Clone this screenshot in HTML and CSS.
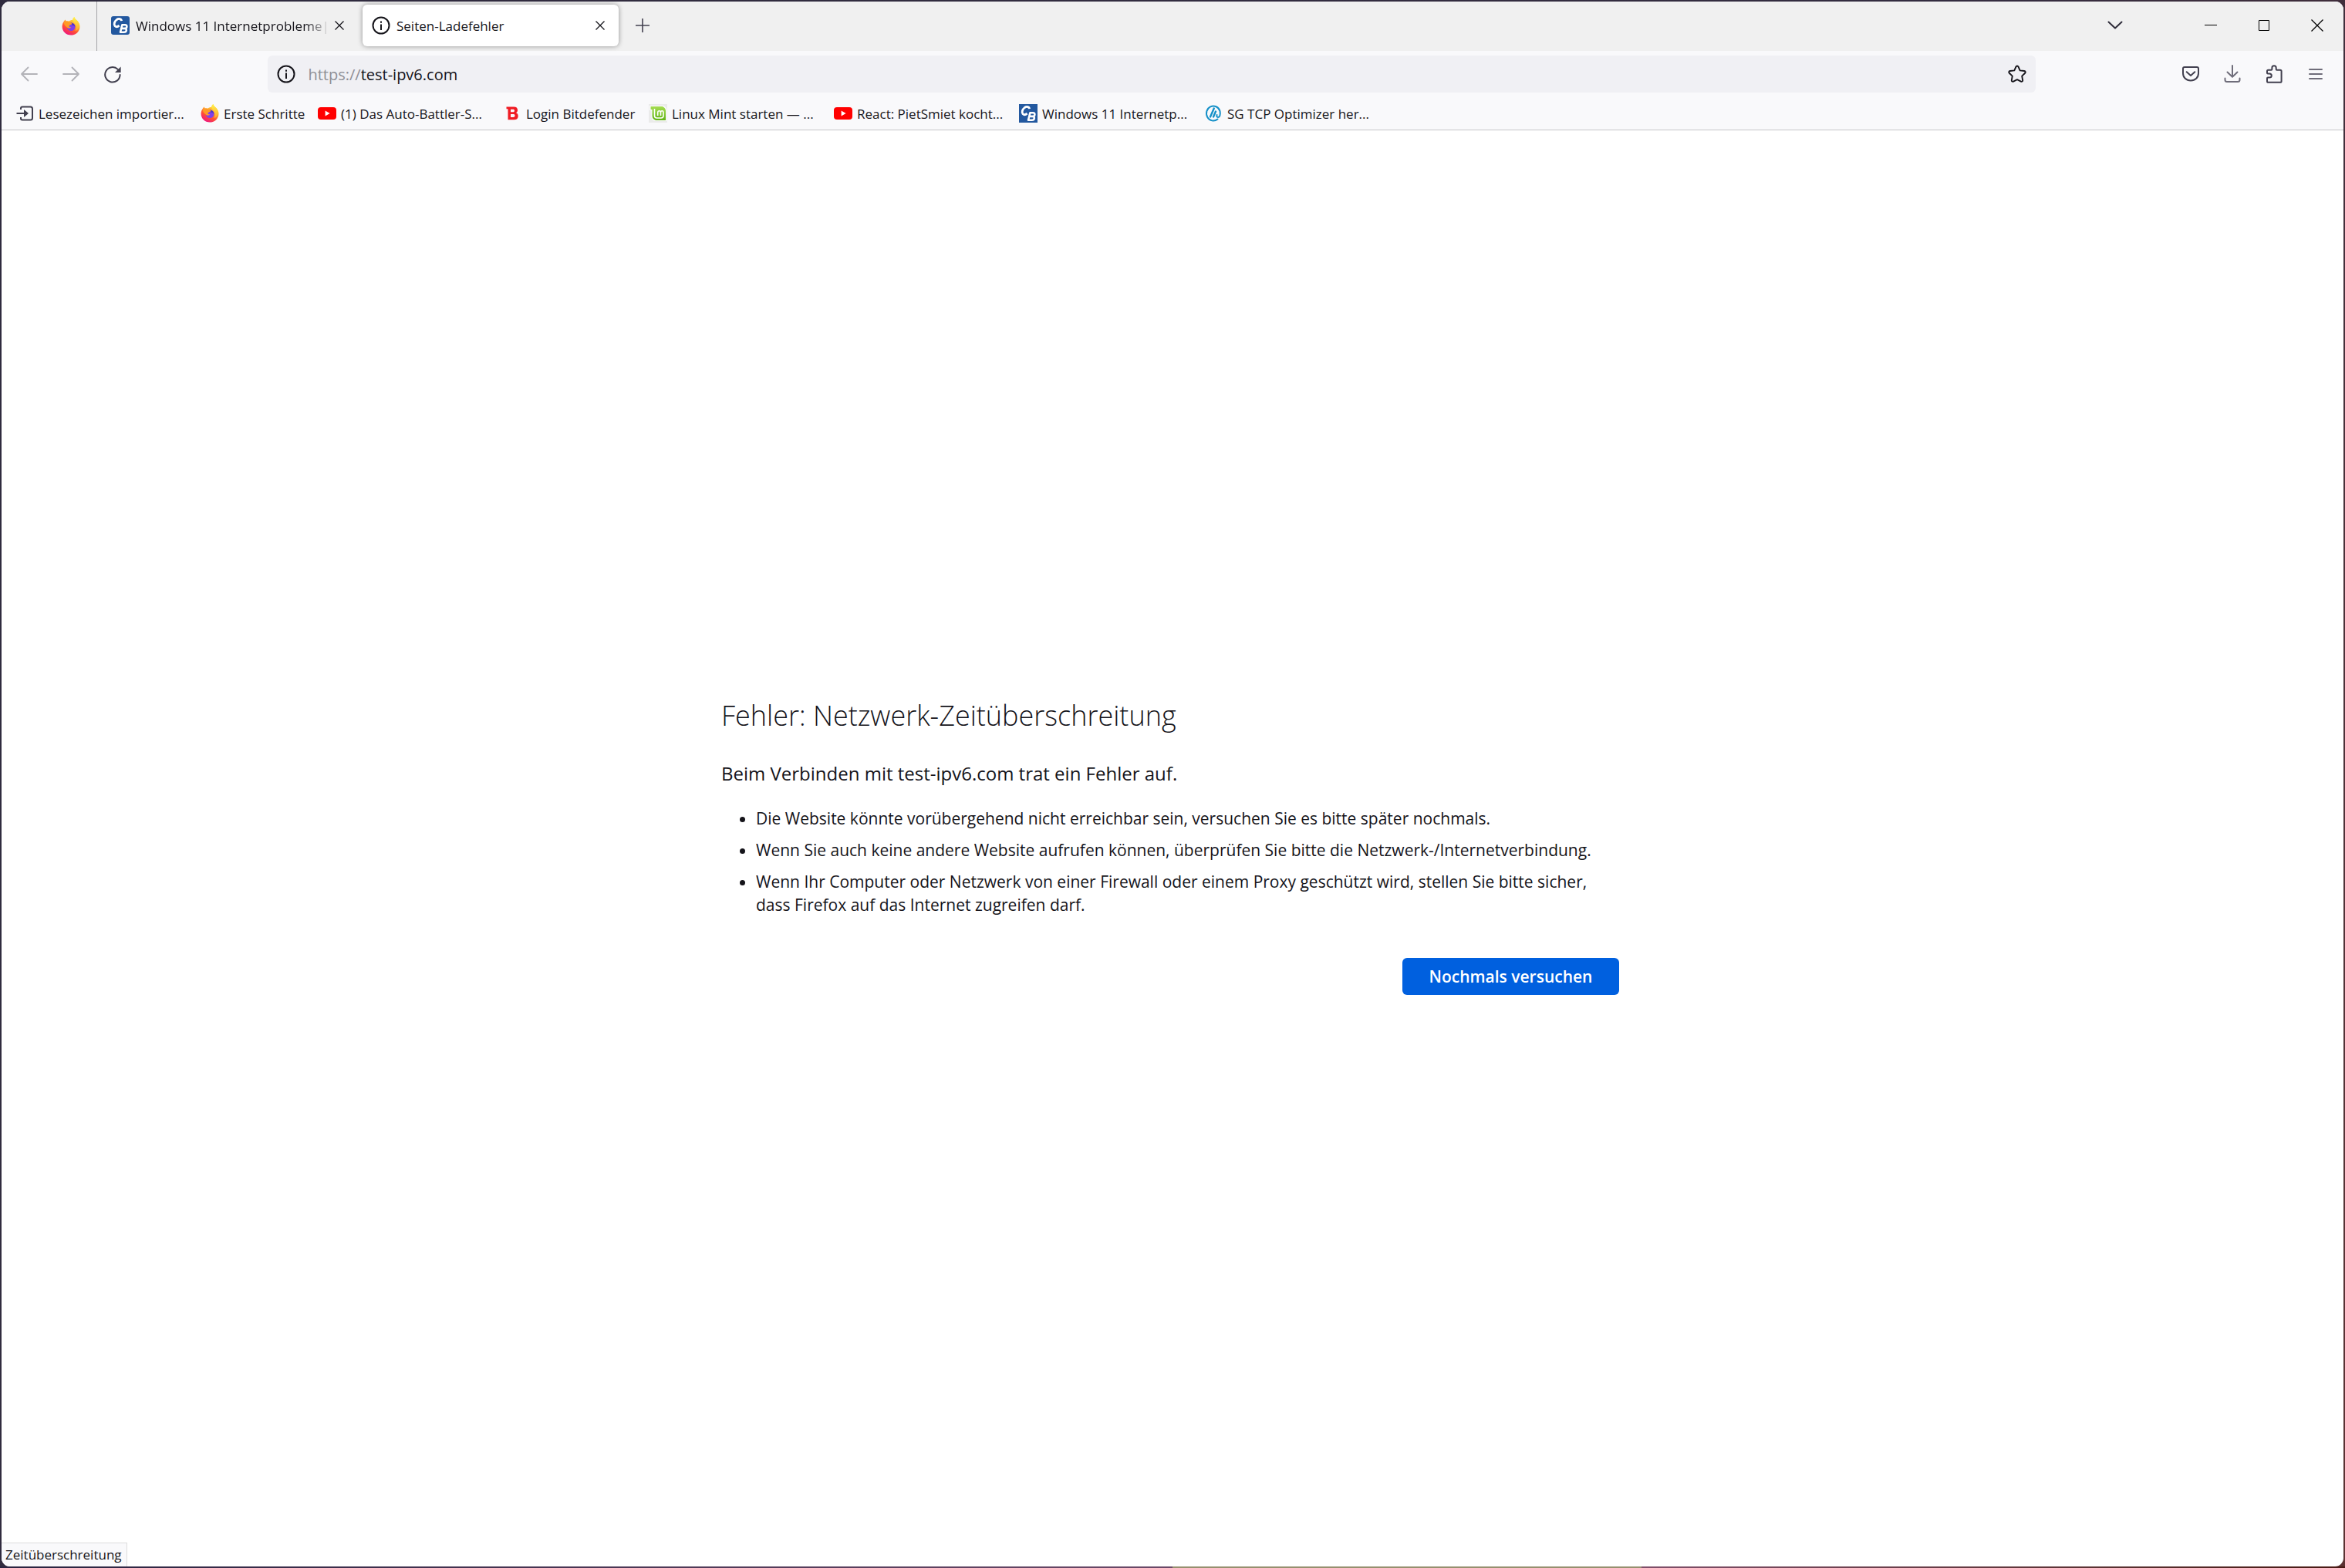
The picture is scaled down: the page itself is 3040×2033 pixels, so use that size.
FILE: index.html
```html
<!DOCTYPE html>
<html lang="de">
<head>
<meta charset="utf-8">
<title>Seiten-Ladefehler</title>
<link rel="stylesheet" href="styles.css">
</head>
<body>
<svg class="defs" aria-hidden="true">
  <defs>
    <linearGradient id="fx-body" x1="0.8" y1="0.1" x2="0.3" y2="1">
      <stop offset="0" stop-color="#fff044"/>
      <stop offset="0.35" stop-color="#ffa42c"/>
      <stop offset="0.65" stop-color="#ff5034"/>
      <stop offset="1" stop-color="#ee1284"/>
    </linearGradient>
    <linearGradient id="fx-tail" x1="0.5" y1="0" x2="0.5" y2="1">
      <stop offset="0" stop-color="#fff24a"/>
      <stop offset="1" stop-color="#ffa62e"/>
    </linearGradient>
    <linearGradient id="mint" x1="0" y1="0" x2="0" y2="1">
      <stop offset="0" stop-color="#a5dc52"/>
      <stop offset="1" stop-color="#62b416"/>
    </linearGradient>
    <symbol id="firefox" viewBox="0 0 24 24">
      <path fill="url(#fx-body)" d="M3 5.500C3.700 4.200 4.600 3.700 5 3.500 5 4.500 5.200 5.200 5.800 5.600c1.200-.4 2.500-.3 3.400.1C10.400 4.500 12 4 14 4c.2-1.800.9-3 2.500-4 .2 2.500 3.400 3.800 5 6.600C23.300 9 24 12 23.200 15 22 20 17.500 23.600 12 23.600 5.600 23.600.6 18.800.6 12.600.6 9.600 1.600 7.300 3 5.500z"/>
      <path fill="url(#fx-tail)" d="M16.500 0c.2 2.500 3.400 3.800 5 6.600 1 1.700 1.600 4 1.200 6.400-1 3-3.200 4.500-5.200 5 2-3.500 1.500-7.500-1-10C14.500 6 13.600 3 16.500 0z"/>
      <circle cx="12.200" cy="12.700" r="5.300" fill="#8140e8"/>
      <path fill="#4b35c8" d="M12 7.600c3 .2 5.200 2.200 5.300 5.200-1.300-1.800-3-2.300-4.600-2.400z"/>
      <path fill="#ff9a25" d="M3 6.500c2-1 4.800-.9 6.400.4C11 7.100 12.600 7.600 13.600 8.800c-.6.900-1.500 1.100-2.600 1.300-.4.900-1 1.300-1.800 1.700.2 1 1.400 1.700 3.100 1.500-1 1.500-3.200 1.900-4.800.7C5 12.500 2.500 9.500 3 6.500z"/>
    </symbol>
    <symbol id="cb" viewBox="0 0 24 24">
      <path fill="none" stroke="#fff" stroke-width="2.800" d="M13.600 6.200C13.300 3.400 10 2.600 7.300 4.500 4.300 6.800 3.200 10.800 5 12.700c1.400 1.300 3.800 1 5.600-.5"/>
      <path fill="none" stroke="#fff" stroke-width="2.600" stroke-linejoin="round" d="M14.400 11.200h3.700c3.300 0 3 4.700-.6 4.700h-4.200 4c3.800 0 3.200 4.900-.7 4.900h-4.600z"/>
    </symbol>
    <symbol id="info" viewBox="0 0 24 24">
      <circle cx="12" cy="12" r="10.500" fill="none" stroke="currentColor" stroke-width="2"/>
      <path fill="currentColor" d="M11 10.500h2V18h-2zM11 6.500h2v2.200h-2z"/>
    </symbol>
    <symbol id="youtube" viewBox="0 0 24 24">
      <rect y="4" width="24" height="16" rx="4" fill="#f00"/>
      <path fill="#fff" d="M9.600 8.500v7l6-3.500z"/>
    </symbol>
    <symbol id="close" viewBox="0 0 12 12">
      <path d="M.5.500l11 11M11.500.500l-11 11" fill="none" stroke="currentColor" stroke-width="1.300"/>
    </symbol>
  </defs>
</svg>

<div class="window">
  <header class="chrome">
    <div class="tabstrip">
      <button class="pinned" aria-label="Firefox View"><svg class="icon"><use href="#firefox"/></svg></button>
      <div class="tab">
        <svg class="icon cb cb-round"><use href="#cb"/></svg>
        <span class="tab-title fade">Windows 11 Internetprobleme| S</span>
        <button class="tab-close" aria-label="Tab schließen"><svg class="close-icon"><use href="#close"/></svg></button>
      </div>
      <div class="tab selected">
        <svg class="icon"><use href="#info"/></svg>
        <span class="tab-title">Seiten-Ladefehler</span>
        <button class="tab-close" aria-label="Tab schließen"><svg class="close-icon"><use href="#close"/></svg></button>
      </div>
      <button class="tool new-tab" aria-label="Neuer Tab"><svg class="icon" viewBox="0 0 24 24"><path d="M12 3v18M3 12h18" fill="none" stroke="currentColor" stroke-width="1.600"/></svg></button>
      <button class="tool all-tabs" aria-label="Tabs auflisten"><svg class="icon" viewBox="0 0 24 24"><path d="M3.500 7.500l8.500 8 8.500-8" fill="none" stroke="currentColor" stroke-width="2" stroke-linecap="round" stroke-linejoin="round"/></svg></button>
      <div class="caption">
        <button aria-label="Minimieren"><svg class="icon" viewBox="0 0 24 24"><path d="M4 11.500h16" stroke="currentColor"/></svg></button>
        <button aria-label="Maximieren"><svg class="icon" viewBox="0 0 24 24"><path d="M5.500 5.500h13v13h-13z" fill="none" stroke="currentColor"/></svg></button>
        <button aria-label="Schließen"><svg class="icon" viewBox="0 0 24 24"><path d="M4.500 4.500l15 15M19.500 4.500l-15 15" fill="none" stroke="currentColor" stroke-width="1.300"/></svg></button>
      </div>
    </div>

    <nav class="navbar">
      <div class="tools">
        <button class="tool" disabled aria-label="Zurück"><svg class="icon" viewBox="0 0 24 24"><path d="M22 12H2M10.500 3.500L2 12l8.500 8.500" fill="none" stroke="currentColor" stroke-width="1.800" stroke-linecap="round" stroke-linejoin="round"/></svg></button>
        <button class="tool" disabled aria-label="Vor"><svg class="icon" viewBox="0 0 24 24"><path d="M2 12h20M13.500 3.500L22 12l-8.500 8.500" fill="none" stroke="currentColor" stroke-width="1.800" stroke-linecap="round" stroke-linejoin="round"/></svg></button>
        <button class="tool" aria-label="Neu laden"><svg class="icon" viewBox="0 0 24 24"><path d="M21.600 13A9.700 9.700 0 1 1 18.700 5.900" fill="none" stroke="currentColor" stroke-width="2" stroke-linecap="round"/><path fill="currentColor" d="M22.600 2.500v7.600H15z"/></svg></button>
      </div>
      <div class="spring"></div>
      <div class="urlbar">
        <svg class="icon"><use href="#info"/></svg>
        <label class="scheme" for="url">https://</label>
        <input id="url" type="text" value="test-ipv6.com">
        <button class="star" aria-label="Lesezeichen hinzufügen"><svg class="icon" viewBox="0 0 24 24"><path d="M12 1.500c.7 0 1.200.4 1.500 1l2.200 4.900 5.500.6c1.500.2 2 1.700 1 2.800l-4 3.800 1 5.400c.2 1.400-1.100 2.300-2.300 1.700L12 19.100l-4.900 2.600c-1.200.6-2.500-.3-2.300-1.700l1-5.400-4-3.800c-1-1.100-.5-2.600 1-2.800l5.500-.6 2.200-4.900c.3-.6.800-1 1.500-1z" fill="none" stroke="currentColor" stroke-width="1.900" stroke-linejoin="round"/></svg></button>
      </div>
      <div class="spring"></div>
      <div class="tools">
        <button class="tool" aria-label="Bei Pocket speichern"><svg class="icon" viewBox="0 0 24 24"><path d="M4 3h16c1.200 0 2 .8 2 2v6c0 5.500-4.200 9.500-10 9.500S2 16.500 2 11V5c0-1.200.8-2 2-2z" fill="none" stroke="currentColor" stroke-width="2"/><path d="M6.700 9.200l5.300 4.800 5.300-4.800" fill="none" stroke="currentColor" stroke-width="2" stroke-linecap="round" stroke-linejoin="round"/></svg></button>
        <button class="tool soft" aria-label="Downloads"><svg class="icon" viewBox="0 0 24 24"><path d="M12 1v14.500M5.500 9.500l6.500 6.300 6.500-6.300M2.500 17.500v2c0 1.500 1 2.500 2.500 2.500h14c1.500 0 2.500-1 2.500-2.500v-2" fill="none" stroke="currentColor" stroke-width="2" stroke-linecap="round" stroke-linejoin="round"/></svg></button>
        <button class="tool" aria-label="Erweiterungen"><svg class="icon" viewBox="0 0 24 24"><path d="M3 8.300c0-1 .6-1.500 1.500-1.500h3.900c.7 0 1-.3 1-1V3.900c0-1.500 1.100-2.700 2.600-2.700s2.700 1.200 2.700 2.700v1.900c0 .7.300 1 1 1H20c.9 0 1.600.6 1.600 1.500v12.900c0 .9-.7 1.600-1.600 1.600H4.600C3.600 22.800 3 22.100 3 21.200v-3.600c0-.7.300-1 1-1h2c1.600 0 2.800-1.100 2.800-2.600S7.600 11.400 6 11.400H4c-.7 0-1-.3-1-1z" fill="none" stroke="currentColor" stroke-width="2"/></svg></button>
        <button class="tool soft" aria-label="Menü"><svg class="icon" viewBox="0 0 24 24"><path d="M4 6h16M4 12h16M4 18h16" fill="none" stroke="currentColor" stroke-width="2" stroke-linecap="round"/></svg></button>
      </div>
    </nav>

    <div class="bookmarks">
      <a class="long import" href="#"><svg class="icon" viewBox="0 0 24 24"><path d="M7 7V5.500C7 4 8 3.500 9 3.500h10.500C21 3.500 22 4.500 22 6v12c0 1.500-1 2.500-2.500 2.500H9c-1 0-2-.5-2-2V17" fill="none" stroke="currentColor" stroke-width="2"/><path d="M1.500 12H12" stroke="currentColor" stroke-width="2"/><path d="M11 7l6 5-6 5z" fill="currentColor"/></svg>Lesezeichen importier...</a>
      <a class="short" href="#"><svg class="icon"><use href="#firefox"/></svg>Erste Schritte</a>
      <a class="long" href="#"><svg class="icon"><use href="#youtube"/></svg>(1) Das Auto-Battler-S...</a>
      <a class="medium" href="#"><svg class="icon" viewBox="0 0 24 24"><path fill="#f01c24" fill-rule="evenodd" d="M4.500 3.500h9.800c3 0 4.700 1.600 4.700 4.200 0 1.800-.8 3-2.200 3.600 2 .6 2.900 2 2.900 4.100 0 3.200-2 4.900-5.400 4.900H6.500V6.200H4.500zM10 6.800v3.500h3c1.400 0 2-.6 2-1.800 0-1.100-.6-1.700-2-1.700zM10 13.100V17h3.300c1.500 0 2.200-.7 2.200-2s-.7-1.900-2.200-1.900z"/></svg>Login Bitdefender</a>
      <a class="long" href="#"><svg class="icon" viewBox="0 0 24 24"><path fill="#ebebeb" d="M0 0h24v24H0z"/><path fill="#fff" d="M1 2h16c3.500 0 6 2.500 6 6v14H10c-4 0-6.500-2.500-6.500-6.500V8H1z"/><path fill="url(#mint)" d="M2.500 3h14C19.500 3 22 5.500 22 8.500V21H10.500C7 21 4.500 18.500 4.500 15V7h-2z"/><path d="M7.500 6v9c0 2 1 3 3 3h5.500c2 0 3-1 3-3v-4c0-3-3.500-3-3.500 0v4-4c0-3-3.800-3-3.800 0v4" fill="none" stroke="#fff" stroke-width="1.600"/></svg>Linux Mint starten — ...</a>
      <a class="long" href="#"><svg class="icon"><use href="#youtube"/></svg>React: PietSmiet kocht...</a>
      <a class="long" href="#"><svg class="icon cb"><use href="#cb"/></svg>Windows 11 Internetp...</a>
      <a class="long" href="#"><svg class="icon" viewBox="0 0 24 24"><path fill="none" stroke="#1590c8" stroke-width="2" stroke-linecap="round" d="M17.500 19.500A9 9.500 0 1 1 20.500 9c.9 4.500-.2 8-2.500 8-1.700 0-2-1.200-1.400-3"/><path fill="none" stroke="#1590c8" stroke-width="2.400" stroke-linecap="round" d="M12.800 5.500L8 16.500M15 9.500l-3 7"/></svg>SG TCP Optimizer her...</a>
    </div>
  </header>

  <main class="page">
    <section class="error">
      <h1>Fehler: Netzwerk-Zeitüberschreitung</h1>
      <p>Beim Verbinden mit test-ipv6.com trat ein Fehler auf.</p>
      <ul>
        <li>Die Website könnte vorübergehend nicht erreichbar sein, versuchen Sie es bitte später nochmals.</li>
        <li>Wenn Sie auch keine andere Website aufrufen können, überprüfen Sie bitte die Netzwerk-/Internetverbindung.</li>
        <li>Wenn Ihr Computer oder Netzwerk von einer Firewall oder einem Proxy geschützt wird, stellen Sie bitte sicher, dass Firefox auf das Internet zugreifen darf.</li>
      </ul>
      <button class="retry">Nochmals versuchen</button>
    </section>
    <div class="status">Zeitüberschreitung</div>
  </main>
</div>
</body>
</html>
```

FILE: styles.css
```css
* { box-sizing: border-box; }

body {
  margin: 0;
  padding: 2px;
  background:
    linear-gradient(90deg, #2a2440 0%, #6b4a68 50%, #96906f 50%, #96906f 70%, #80506a 70%, #5a3232 90%, #4a1a14 100%) bottom / 100% 2px no-repeat,
    linear-gradient(120deg, #2f2b3e 0%, #332c40 60%, #5c3232 100%);
  font-family: "Open Sans", "Noto Sans", sans-serif;
  font-size: 17px;
  color: #15141a;
}

button {
  display: flex;
  align-items: center;
  justify-content: center;
  padding: 0;
  border: 0;
  background: none;
  color: inherit;
  font: inherit;
}

.defs { position: absolute; width: 0; height: 0; }
.icon { flex: none; width: 24px; height: 24px; }

.window {
  display: flex;
  flex-direction: column;
  min-height: calc(100vh - 4px);
  overflow: hidden;
  border-radius: 11px;
  background: #fff;
}

.chrome {
  background: #f9f9fb;
  border-bottom: 1px solid #c6c6c8;
}

/* Tab strip */
.tabstrip {
  display: flex;
  align-items: center;
  height: 64px;
  padding-bottom: 2px;
  background: #f0f0f0;
}
.pinned {
  height: 64px;
  margin-bottom: -2px;
  width: 124px;
  padding-left: 56px;
  border-right: 1px solid #a5a5a8;
}
.tab {
  display: flex;
  align-items: center;
  gap: 8px;
  width: 332px;
  height: 54px;
  margin-left: 6px;
  padding: 0 12px;
}
.tab + .tab { margin-left: 6px; }
.tab.selected {
  border-radius: 6px;
  background: #fff;
  box-shadow: 0 0 6px rgba(0, 0, 0, .4);
}
.tab-title {
  flex: 1;
  min-width: 0;
  white-space: nowrap;
}
.fade {
  -webkit-mask-image: linear-gradient(to left, transparent, #000 32px);
  mask-image: linear-gradient(to left, transparent, #000 32px);
}
.tab-close { width: 24px; height: 24px; margin-left: -8px; }
.close-icon { width: 12px; height: 12px; }
.cb { background: #23589f; }
.cb-round { border-radius: 3px; }
.tool { width: 54px; height: 48px; color: #42404f; }
.tool:disabled { color: #b3b3b8; }
.soft { color: #6f6d7a; }
.new-tab { margin-left: 4px; }
.all-tabs { margin-left: auto; margin-right: 62px; color: #2f2d3a; }
.caption { display: flex; color: #000; }
.caption button { width: 69px; height: 62px; }

/* Navigation bar */
.navbar {
  display: flex;
  align-items: center;
  height: 66px;
  padding: 0 9px 6px;
}
.tools { display: flex; }
.spring { flex: 1; }
.urlbar {
  flex: 13;
  display: flex;
  align-items: center;
  height: 48px;
  padding: 0 12px;
  border-radius: 6px;
  background: #f0f0f4;
  font-size: 20px;
}
.scheme { margin-left: 16px; color: #8f8f96; }
.urlbar input {
  flex: 1;
  min-width: 0;
  padding: 0;
  border: 0;
  outline: 0;
  background: none;
  color: inherit;
  font: inherit;
}

/* Bookmarks */
.bookmarks {
  display: flex;
  height: 36px;
  padding-left: 18px;
}
.bookmarks a {
  display: flex;
  align-items: center;
  gap: 6px;
  height: 30px;
  color: inherit;
  text-decoration: none;
  white-space: nowrap;
}
.long { width: 240px; }
.medium { width: 189px; }
.short { width: 152px; }
.import .icon { color: #42404f; }

/* Error page */
.page {
  flex: 1;
  display: flex;
  flex-direction: column;
  justify-content: center;
  align-items: center;
  position: relative;
  padding: 0 6px 8px 0;
}
.error {
  display: flex;
  flex-direction: column;
  width: 1164px;
  max-width: 100%;
}
h1 {
  margin: 0;
  font-size: 36px;
  font-weight: 300;
  line-height: 52px;
}
.error p {
  margin: 32px 0 26px;
  font-size: 24px;
  line-height: 34px;
}
.error ul {
  margin: 0;
  padding-left: 45px;
  font-size: 21px;
  line-height: 30px;
}
.error li + li { margin-top: 11px; }
.retry {
  align-self: flex-end;
  width: 281px;
  height: 48px;
  margin-top: 54px;
  border-radius: 6px;
  background: #0060df;
  color: #fff;
  font-size: 21px;
  font-weight: 600;
}

.status {
  position: absolute;
  left: 0;
  bottom: 0;
  padding: 0 6px 0 5px;
  border: 1px solid #dcdcdc;
  border-width: 1px 1px 0 0;
  background: #f9f9fb;
  line-height: 30px;
}
```
